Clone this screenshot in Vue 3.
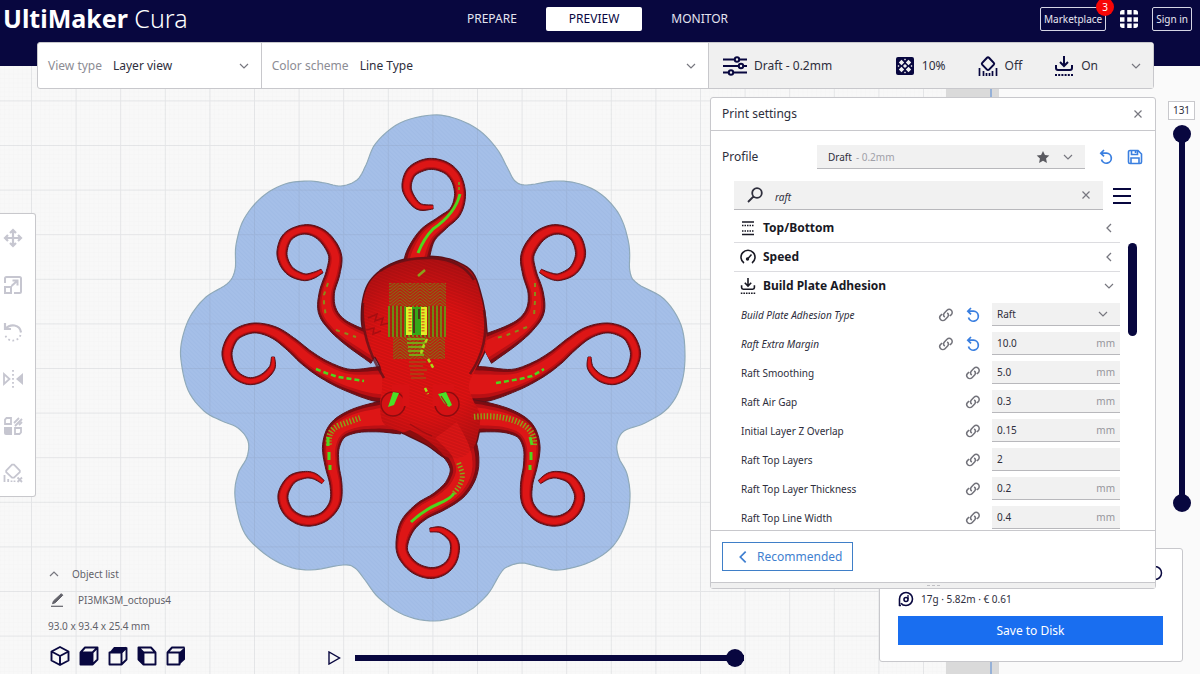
<template>
  <div class="app">
    <!-- Icon sprite -->
    <svg class="sprite" aria-hidden="true">
      <symbol id="down" viewBox="0 0 12 12"><path d="M2 4l4 4 4-4" fill="none" stroke="currentColor" stroke-width="1.2" /></symbol>
      <symbol id="up" viewBox="0 0 12 12"><path d="M2 8l4-4 4 4" fill="none" stroke="currentColor" stroke-width="1.2" /></symbol>
      <symbol id="left" viewBox="0 0 12 12"><path d="M8 2L4 6l4 4" fill="none" stroke="currentColor" stroke-width="1.3" /></symbol>
      <symbol id="close" viewBox="0 0 12 12"><path d="M2.5 2.5l7 7M9.5 2.5l-7 7" fill="none" stroke="currentColor" stroke-width="1.2" /></symbol>
      <symbol id="apps" viewBox="0 0 20 20">
        <path d="M3 0h2v5H0V3a3 3 0 0 1 3-3zM8 0h5v5H8zM15 0h2a3 3 0 0 1 3 3v2h-5zM0 8h5v5H0zM8 8h5v5H8zM15 8h5v5h-5zM0 15h5v5H3a3 3 0 0 1-3-3zM8 15h5v5H8zM15 15h5v2a3 3 0 0 1-3 3h-2z" fill="currentColor" />
      </symbol>
      <symbol id="sliders" viewBox="0 0 24 20">
        <g fill="none" stroke="currentColor" stroke-width="2">
          <path d="M0 3.5h11M17 3.5h7M0 10h15M21 10h3M0 16.5h5M11 16.5h13" />
          <circle cx="14" cy="3.5" r="2.2" /><circle cx="18" cy="10" r="2.2" /><circle cx="8" cy="16.5" r="2.2" />
        </g>
      </symbol>
      <symbol id="infill" viewBox="0 0 20 20">
        <rect x="1" y="1" width="18" height="18" rx="2" fill="currentColor" />
        <g fill="#f0f0f0">
          <path d="M6.5 3.8l2.7 2.7-2.7 2.7-2.7-2.7zM13.5 3.8l2.7 2.7-2.7 2.7-2.7-2.7zM6.5 10.8l2.7 2.7-2.7 2.7-2.7-2.7zM13.5 10.8l2.7 2.7-2.7 2.7-2.7-2.7z" />
          <path d="M10 7.9l2.1 2.1-2.1 2.1L7.9 10zM10 2.5l1 1-1 1-1-1zM10 15.5l1 1-1 1-1-1zM3.5 9l1 1-1 1-1-1zM16.5 9l1 1-1 1-1-1z" />
        </g>
      </symbol>
      <symbol id="support" viewBox="0 0 20 20">
        <g fill="none" stroke="currentColor" stroke-width="2">
          <path d="M9 1.7a1.4 1.4 0 0 1 2 0l4.8 5.2a1.4 1.4 0 0 1 0 1.8L11 13.6a1.4 1.4 0 0 1-2 0L4.2 8.7a1.4 1.4 0 0 1 0-1.8z" />
          <path d="M1.5 12v8M5.5 15v5M8.5 17v3M11.5 17v3M14.5 15v5M18.5 12v8" stroke-width="1.7" />
        </g>
      </symbol>
      <symbol id="adhesion" viewBox="0 0 20 20">
        <g fill="none" stroke="currentColor" stroke-width="2">
          <path d="M10 0v9M6 6l4 4 4-4M2 9v3a2 2 0 0 0 2 2h12a2 2 0 0 0 2-2V9" />
          <path d="M1 19h18" stroke-dasharray="2 1.2" />
        </g>
      </symbol>
      <symbol id="move" viewBox="0 0 20 20">
        <path d="M10 2v16M2 10h16M7 5l3-3 3 3M7 15l3 3 3-3M5 7l-3 3 3 3M15 7l3 3-3 3" fill="none" stroke="currentColor" stroke-width="2.2" />
      </symbol>
      <symbol id="scale" viewBox="0 0 20 20">
        <path d="M2 8V3.5A1.5 1.5 0 0 1 3.5 2h13A1.5 1.5 0 0 1 18 3.5v13a1.5 1.5 0 0 1-1.5 1.5H11M2 12h6v6H2zM8.5 11L14 6M9.5 5.5h5v5" fill="none" stroke="currentColor" stroke-width="2" />
      </symbol>
      <symbol id="rotate" viewBox="0 0 20 20">
        <path d="M2 1v6h6M2.5 7C7 1.5 17 2 18 10.5" fill="none" stroke="currentColor" stroke-width="2.2" />
        <path d="M17.5 13A8 8 0 0 1 2 12" fill="none" stroke="currentColor" stroke-width="1.8" stroke-dasharray="1.8 2.5" />
      </symbol>
      <symbol id="mirror" viewBox="0 0 20 20">
        <path d="M1 5v10l5.5-5z" fill="none" stroke="currentColor" stroke-width="1.8" />
        <path d="M20 4v12l-7-6z" fill="currentColor" />
        <path d="M10 1v18" stroke="currentColor" stroke-width="1.8" stroke-dasharray="1.8 2.2" />
      </symbol>
      <symbol id="mesh" viewBox="0 0 20 20">
        <path d="M2 8V3.5L3.5 2H8v6zM12 12h6v4.5L16.5 18H12zM11 7l5-5M12 10l7-7M16 9l3-3" fill="none" stroke="currentColor" stroke-width="1.8" />
        <path d="M1 11h8v8H3a2 2 0 0 1-2-2z" fill="currentColor" />
      </symbol>
      <symbol id="blocker" viewBox="0 0 20 20">
        <g fill="none" stroke="currentColor" stroke-width="1.8">
          <path d="M9 1.6h2l5.8 6v1.6L11 14.7H9L3.2 9.2V7.6z" />
          <path d="M1.5 12v7M5.2 16v3M8.5 17.5V19M11.5 17.5V19M14.5 14.5L19 19M19 14.5L14.5 19" />
        </g>
      </symbol>
      <symbol id="reset" viewBox="0 0 16 16">
        <path d="M6 1L2.8 4.2 6 7.4M3 4.2h5.5a5 5 0 1 1-5 6.3" fill="none" stroke="currentColor" stroke-width="1.7" />
      </symbol>
      <symbol id="save" viewBox="0 0 16 16">
        <path d="M3 1.5h8L14.5 5v8a1.5 1.5 0 0 1-1.5 1.5H3A1.5 1.5 0 0 1 1.5 13V3A1.5 1.5 0 0 1 3 1.5zM4.5 1.5v4h6v-4M4 14.5V9h8v5.5M8.5 2v2" fill="none" stroke="currentColor" stroke-width="1.6" />
      </symbol>
      <symbol id="star" viewBox="0 0 16 16"><path d="M8 1l2.2 4.7 5 .6-3.7 3.5 1 5.1L8 12.4l-4.5 2.5 1-5.1L.8 6.3l5-.6z" fill="currentColor" /></symbol>
      <symbol id="search" viewBox="0 0 16 16"><path d="M1 15l5.5-5.5M10 1.2a4.8 4.8 0 1 1 0 9.6 4.8 4.8 0 0 1 0-9.6z" fill="none" stroke="currentColor" stroke-width="1.8" /></symbol>
      <symbol id="menu" viewBox="0 0 18 18"><path d="M0 2h18M0 9h18M0 16h18" stroke="currentColor" stroke-width="2" /></symbol>
      <symbol id="layers" viewBox="0 0 16 16">
        <path d="M2 2h12M2 14.5h12" stroke="currentColor" stroke-width="1.6" />
        <path d="M2 5.5h12M2 11h12" stroke="currentColor" stroke-width="1.3" stroke-dasharray="1.5 1" />
      </symbol>
      <symbol id="speed" viewBox="0 0 16 16">
        <path d="M4 14a7 7 0 1 1 8 0" fill="none" stroke="currentColor" stroke-width="1.6" />
        <path d="M8 9.5l3.5-4" stroke="currentColor" stroke-width="1.5" /><circle cx="7.5" cy="10" r="1.7" fill="currentColor" />
      </symbol>
      <symbol id="link" viewBox="0 0 16 16">
        <path d="M6.8 10.2a3 3 0 0 1-.4-4.2L9 3.3a3 3 0 0 1 4.3 4.3L11.8 9M9.2 5.8a3 3 0 0 1 .4 4.2L7 12.7a3 3 0 0 1-4.3-4.3L4.2 7" fill="none" stroke="currentColor" stroke-width="1.5" />
      </symbol>
      <symbol id="pencil" viewBox="0 0 14 14"><path d="M1 13.3h12" stroke="currentColor" stroke-width="1.2" /><path d="M11.3.7l1.5 1.5-7.5 7.5-2.8 1 1-2.8z" fill="currentColor" stroke="currentColor" /></symbol>
      <symbol id="spool" viewBox="0 0 16 16">
        <g fill="none" stroke="currentColor" stroke-width="1.6">
          <path d="M1.5 15V8A6.5 6.5 0 1 1 8 14.5c-2 0-4-.9-5-2.3M1 14.5h2" />
          <circle cx="8" cy="8.5" r="2" /><path d="M10 8V4" stroke-width="1.3" />
        </g>
      </symbol>
      <symbol id="info" viewBox="0 0 16 16"><circle cx="8" cy="8" r="6.5" fill="none" stroke="currentColor" stroke-width="1.5" /><path d="M8 7v5M8 4v1.5" stroke="currentColor" stroke-width="1.5" /></symbol>
      <symbol id="play" viewBox="0 0 14 14"><path d="M2 1v12l10.5-6z" fill="none" stroke="currentColor" stroke-width="1.4" /></symbol>
      <symbol id="cube-3d" viewBox="0 0 20 20"><path d="M10 1l8.5 4.5v9L10 19l-8.5-4.5v-9zM1.5 5.5L10 10l8.5-4.5M10 10v9" fill="none" stroke="currentColor" stroke-width="1.9" stroke-linejoin="round" /></symbol>
      <symbol id="cube-front" viewBox="0 0 20 20"><path d="M1.5 6.5h12v12h-12zM1.5 6.5l4.5-5h12.500v12l-5 5M13.5 6.5l5-5" fill="none" stroke="currentColor" stroke-width="1.9" stroke-linejoin="round" /><path d="M1.5 6.5h12v12h-12z" fill="currentColor" /></symbol>
      <symbol id="cube-top" viewBox="0 0 20 20"><path d="M1.5 6.5h12v12h-12zM18.5 1.5v12l-5 5M13.5 6.5l5-5" fill="none" stroke="currentColor" stroke-width="1.9" stroke-linejoin="round" /><path d="M1 7l5-6h13l-5 6z" fill="currentColor" /></symbol>
      <symbol id="cube-left" viewBox="0 0 20 20"><path d="M6.5 6.5h12v12h-12zM6.5 6.5l-5-5H14l4.5 5M1.5 1.5v12l5 5" fill="none" stroke="currentColor" stroke-width="1.9" stroke-linejoin="round" /><path d="M1 1l6 5.5V19l-6-5.5z" fill="currentColor" /></symbol>
      <symbol id="cube-right" viewBox="0 0 20 20"><path d="M1.5 6.5h12v12h-12zM1.5 6.5l4.5-5h12.500" fill="none" stroke="currentColor" stroke-width="1.9" stroke-linejoin="round" /><path d="M13 6.5L19 1v12.500L13 19z" fill="currentColor" /></symbol>
    </svg>

    <!-- Build plate with the sliced model -->
    <svg class="scene" viewBox="0 0 1200 674" preserveAspectRatio="xMidYMid slice" role="img" aria-label="Layer preview of PI3MK3M_octopus4">
      <defs>
        <pattern id="minor" x="31" y="100.4" width="4.46" height="4.46" patternUnits="userSpaceOnUse">
          <path d="M0 0H4.46M0 0V4.46" fill="none" stroke="#eeeeee" stroke-width="0.5" />
        </pattern>
        <pattern id="major" x="31" y="100.4" width="44.6" height="44.6" patternUnits="userSpaceOnUse">
          <path d="M0 .5H44.6M.5 0V44.6" fill="none" stroke="#6a7480" stroke-opacity="0.13" />
        </pattern>
        <pattern id="hatch" width="3" height="3" patternUnits="userSpaceOnUse" patternTransform="rotate(-45)">
          <path d="M.5 0v3" stroke="#96b3df" stroke-width="0.7" />
        </pattern>
        <pattern id="ridges" width="3" height="3" patternUnits="userSpaceOnUse" patternTransform="rotate(20)">
          <path d="M0 1h3" stroke="#6e0a0c" stroke-width="0.8" />
        </pattern>
        <pattern id="skin" width="20" height="3" patternUnits="userSpaceOnUse">
          <rect width="20" height="3" fill="#b02a10" />
          <path d="M0 0l10 8L20 0M0-3l10 8 10-8M0-6l10 8 10-8" fill="none" stroke="#6f8a16" />
        </pattern>
        <pattern id="bars" x="388" width="4" height="4" patternUnits="userSpaceOnUse">
          <path d="M1 0v4" stroke="#56a812" stroke-width="1.6" /><path d="M3 0v4" stroke="#8c2a0c" stroke-width="1.2" />
        </pattern>
        <radialGradient id="head" gradientUnits="userSpaceOnUse" cx="425" cy="360" r="110">
          <stop offset="0.5" stop-color="#e01212" />
          <stop offset="1" stop-color="#a80f12" />
        </radialGradient>
      </defs>
      <rect width="1200" height="674" fill="#fafafa" />
      <rect width="946" height="674" fill="#f8f8f8" />
      <rect width="946" height="674" fill="url(#minor)" />
      <rect x="946" width="53" height="674" fill="#dadada" />
      <path d="M991 0v674" stroke="#7fa3d6" stroke-width="1.5" />
      <path :d="raft" fill="#a5bfe8" stroke="#8fa9b8" stroke-width="1.2" />
      <path :d="raft" fill="url(#hatch)" opacity="0.45" />
      <rect width="946" height="674" fill="url(#major)" />

      <path :d="body" fill="#7c0c12" stroke="#5b1118" stroke-width="3" />
      <g v-for="layer in shades" :key="layer.scale" :fill="layer.fill" :stroke="layer.stroke" stroke-linejoin="round">
        <path v-for="(arm, i) in arms" :key="i" :d="armPath(arm, layer.scale)" />
      </g>
      <path :d="body" fill="url(#head)" />
      <path :d="armPath(frontArm, 0.56)" fill="#dd1616" />
      <path :d="body" fill="url(#ridges)" opacity="0.35" />
      <path d="M363 303Q360 340 384 378M484 310Q490 345 470 374M380 271Q400 257 432 258Q462 260 474 280" fill="none" stroke="#5b1118" stroke-width="2.5" opacity="0.75" />
      <g fill="#d41214" stroke="#8c0c10" stroke-width="1.5">
        <circle cx="393" cy="404" r="12" /><circle cx="447" cy="404" r="12" />
      </g>
      <path d="M392 388h14v18M436 406v-18h18" fill="none" stroke="#d81214" stroke-width="7" />
      <path d="M368 318l9-4-2 7 8-3-2 7 8-2M366 330l8-2-1 6 8-3M410 424q12 8 22 12" fill="none" stroke="#8c0c10" stroke-width="1.5" opacity="0.6" />
      <path d="M402 433l28 13 15 12 3 4Q438 444 410 430z" fill="#650b0e" opacity="0.6" />

      <rect x="389" y="283" width="57" height="23" fill="url(#skin)" opacity="0.8" />
      <rect x="388" y="306" width="58" height="31" fill="url(#bars)" />
      <rect x="393" y="337" width="52" height="22" fill="url(#skin)" opacity="0.8" />
      <path d="M405 307h22v28h-22z" fill="#35a818" />
      <path d="M409 307v28M424 307v28" stroke="#e2ee28" stroke-width="6" />
      <path d="M410 309v24M423 309v24" stroke="#d8761c" stroke-width="3" stroke-dasharray="1.5 1.5" />
      <path d="M414 309v24M419 309v10" stroke="#5b1118" stroke-width="1.5" />
      <path d="M407 339h18M407 343h18M408 347h17M408 351h16M409 355h15" stroke="#6fc416" stroke-width="1.5" />
      <path d="M409 362h17M409 366h14M410 370h17M410 374h14M411 378h15" stroke="#8a6a14" />
      <path d="M427 339l-5 10-1 6M428 359l6 10M425 388l3 6" fill="none" stroke="#a8dc18" stroke-width="2.5" stroke-dasharray="4 2" />
      <path d="M418 276l7-6" stroke="#8aa21a" stroke-width="2.5" />
      <path d="M388 407l5-15 6 1-5 12zM438 394l8-2 6 13-3 2-5-4z" fill="#4be026" />
      <path d="M441 396l6 9" stroke="#b01214" stroke-width="1.2" />
      <g fill="none" stroke="#4fd61c">
        <path d="M418 253Q424 238 433 229Q455 214 460 194" stroke-width="3" />
        <path d="M459 190v-8" stroke="#8a8a18" stroke-width="2" stroke-dasharray="3 2" />
        <path d="M411 522Q424 510 438 504T454 493" stroke-width="3" />
        <path d="M454 493Q464 482 462 472L458 461" stroke="#8aa21a" stroke-width="5" stroke-dasharray="1.5 2" />
        <path d="M329 445Q327 430 340 425L360 418M534 445Q535 431 522 424Q504 414 472 417" stroke="#8aa21a" stroke-width="6" stroke-dasharray="1.4 1.8" />
        <path d="M328 437v9M329 452v8M330 465v5M530 437l2 8M531 452v8M530 465v5" stroke-width="3" />
        <path d="M316 369l10 4 12 4 26 4M496 383l24-4 12-3 12-7" stroke-width="2.5" stroke-dasharray="5 3" />
        <path d="M328 283l-4 12v8l2 14M535 283v18l-1 15M336 330l20 7M527 327l-20 8-14 4" stroke="#8a8a18" stroke-width="2" stroke-dasharray="4 5" />
      </g>
    </svg>

    <header class="topbar">
      <h1 class="brand"><b>UltiMaker</b> <span>Cura</span></h1>
      <nav class="stages">
        <button v-for="name in stages" :key="name" type="button" :class="{ active: name === stage }" @click="stage = name">{{ name }}</button>
      </nav>
      <div class="account">
        <button type="button" class="outlined">Marketplace<span class="badge">3</span></button>
        <button type="button" class="plain" aria-label="Applications"><svg class="i18"><use href="#apps" /></svg></button>
        <button type="button" class="outlined">Sign in</button>
      </div>
    </header>

    <section class="stage-menu">
      <div class="menu-cell">
        <label for="view-type">View type</label>
        <div class="pick">
          <select id="view-type"><option>Layer view</option><option>Solid view</option></select>
          <svg class="i12"><use href="#down" /></svg>
        </div>
      </div>
      <div class="menu-cell">
        <label for="color-scheme">Color scheme</label>
        <div class="pick">
          <select id="color-scheme"><option>Line Type</option><option>Material Color</option></select>
          <svg class="i12"><use href="#down" /></svg>
        </div>
      </div>
      <button type="button" class="summary" @click="panelOpen = !panelOpen">
        <span class="profile-name"><svg class="i24"><use href="#sliders" /></svg>Draft - 0.2mm</span>
        <span><svg class="i20"><use href="#infill" /></svg>10%</span>
        <span><svg class="i20"><use href="#support" /></svg>Off</span>
        <span><svg class="i20"><use href="#adhesion" /></svg>On</span>
        <svg class="i12"><use href="#down" /></svg>
      </button>
    </section>

    <main class="workspace">
      <div class="left-side">
        <div class="toolbar">
          <button v-for="tool in tools" :key="tool" type="button" :aria-label="tool" disabled>
            <svg class="i20"><use :href="'#' + tool" /></svg>
          </button>
        </div>
        <div class="objects">
          <button type="button" class="plain object-toggle"><svg class="i12"><use href="#up" /></svg>Object list</button>
          <button type="button" class="plain object-name"><svg class="i14"><use href="#pencil" /></svg>PI3MK3M_octopus4</button>
          <p>93.0 x 93.4 x 25.4 mm</p>
        </div>
      </div>

      <section v-if="panelOpen" class="panel">
        <div class="panel-title">
          <h2>Print settings</h2>
          <button type="button" class="plain" aria-label="Close" @click="panelOpen = false"><svg class="i12"><use href="#close" /></svg></button>
        </div>

        <div class="profile-row">
          <label for="profile">Profile</label>
          <div class="profile-box">
            <select id="profile"><option>Draft</option><option>Fine</option></select>
            <span class="muted">- 0.2mm</span>
            <svg class="i14 star"><use href="#star" /></svg>
            <svg class="i12"><use href="#down" /></svg>
          </div>
          <button type="button" class="plain blue" aria-label="Discard changes"><svg class="i16"><use href="#reset" /></svg></button>
          <button type="button" class="plain blue" aria-label="Save profile"><svg class="i16"><use href="#save" /></svg></button>
        </div>

        <div class="search-row">
          <div class="search-box">
            <svg class="i16"><use href="#search" /></svg>
            <input v-model="query" type="text" aria-label="Search settings" />
            <button type="button" class="plain" aria-label="Clear" @click="query = ''"><svg class="i12"><use href="#close" /></svg></button>
          </div>
          <button type="button" class="plain navy" aria-label="Setting visibility"><svg class="i18"><use href="#menu" /></svg></button>
        </div>

        <div class="settings">
          <div class="list">
            <button v-for="cat in categories" :key="cat.name" type="button" class="category" :class="{ open: cat.open }">
              <svg class="i16"><use :href="'#' + cat.icon" /></svg>
              <span>{{ cat.name }}</span>
              <svg class="i12 arrow"><use :href="cat.open ? '#down' : '#left'" /></svg>
            </button>
            <div v-for="(item, i) in settings" :key="item.name" class="setting">
              <label :for="'setting-' + i" :class="{ changed: item.changed }">{{ item.name }}</label>
              <svg class="i16 link"><use href="#link" /></svg>
              <button v-if="item.changed" type="button" class="plain blue" aria-label="Restore value"><svg class="i16"><use href="#reset" /></svg></button>
              <div class="field">
                <template v-if="item.options">
                  <select :id="'setting-' + i" v-model="item.value">
                    <option v-for="option in item.options" :key="option">{{ option }}</option>
                  </select>
                  <svg class="i12"><use href="#down" /></svg>
                </template>
                <template v-else>
                  <input :id="'setting-' + i" v-model="item.value" type="text" />
                  <span v-if="item.unit">{{ item.unit }}</span>
                </template>
              </div>
            </div>
          </div>
          <div class="scroll"></div>
        </div>

        <div class="panel-foot">
          <button type="button" class="recommended"><svg class="i16"><use href="#left" /></svg>Recommended</button>
        </div>
        <div class="grip"><i></i><i></i><i></i></div>
      </section>

      <div class="layer-slider">
        <output>{{ topLayer }}</output>
        <div class="tracks">
          <input v-model="topLayer" type="range" min="1" max="131" aria-label="Top layer" />
          <input v-model="bottomLayer" type="range" min="1" max="131" aria-label="Bottom layer" />
        </div>
      </div>
    </main>

    <footer class="dock">
      <div class="views">
        <button v-for="view in views" :key="view" type="button" class="plain navy" :aria-label="view"><svg class="i20"><use :href="'#' + view" /></svg></button>
      </div>
      <div class="playback">
        <button type="button" class="plain navy" aria-label="Play"><svg class="i14"><use href="#play" /></svg></button>
        <input v-model="progress" type="range" min="0" max="100" aria-label="Layer progress" />
      </div>
    </footer>

    <aside class="job">
      <div class="job-time"><svg class="i16"><use href="#info" /></svg></div>
      <div class="job-cost"><svg class="i16"><use href="#spool" /></svg>17g · 5.82m · € 0.61</div>
      <button type="button">Save to Disk</button>
    </aside>
  </div>
</template>

<script setup>
import { ref } from 'vue'

const stages = ['PREPARE', 'PREVIEW', 'MONITOR']
const stage = ref('PREVIEW')
const panelOpen = ref(true)
const query = ref('raft')
const topLayer = ref(131)
const bottomLayer = ref(1)
const progress = ref(100)

const tools = ['move', 'scale', 'rotate', 'mirror', 'mesh', 'blocker']
const views = ['cube-3d', 'cube-front', 'cube-top', 'cube-left', 'cube-right']

const categories = [
  { name: 'Top/Bottom', icon: 'layers' },
  { name: 'Speed', icon: 'speed' },
  { name: 'Build Plate Adhesion', icon: 'adhesion', open: true }
]

const settings = ref([
  { name: 'Build Plate Adhesion Type', value: 'Raft', options: ['Skirt', 'Brim', 'Raft', 'None'], changed: true },
  { name: 'Raft Extra Margin', value: '10.0', unit: 'mm', changed: true },
  { name: 'Raft Smoothing', value: '5.0', unit: 'mm' },
  { name: 'Raft Air Gap', value: '0.3', unit: 'mm' },
  { name: 'Initial Layer Z Overlap', value: '0.15', unit: 'mm' },
  { name: 'Raft Top Layers', value: '2' },
  { name: 'Raft Top Layer Thickness', value: '0.2', unit: 'mm' },
  { name: 'Raft Top Line Width', value: '0.4', unit: 'mm' }
])

// Catmull-Rom through the points, works for any number of components
function smooth(points, closed = false) {
  const n = points.length
  const at = (i) => (closed ? points[(i + n) % n] : points[Math.max(0, Math.min(n - 1, i))])
  const out = []
  for (let i = 0; i < (closed ? n : n - 1); i++) {
    const [a, b, c, d] = [at(i - 1), at(i), at(i + 1), at(i + 2)]
    for (let s = 0; s < 6; s++) {
      const t = s / 6
      out.push(b.map((v, k) => {
        const t1 = (c[k] - a[k]) * t
        const t2 = (2 * a[k] - 5 * v + 4 * c[k] - d[k]) * t * t
        const t3 = (3 * v - a[k] - 3 * c[k] + d[k]) * t * t * t
        return v + (t1 + t2 + t3) / 2
      }))
    }
  }
  if (!closed) out.push(points[n - 1])
  return out
}

const toPath = (points) => 'M' + points.map((p) => p[0].toFixed(1) + ' ' + p[1].toFixed(1)).join('L') + 'Z'

// Arms are centre lines from tip to base: x, y, half width
const sideArms = [
  [[322, 271, 2], [313, 275.5, 3], [303, 277, 3.5], [289, 270, 4.5], [282, 255, 5], [286, 239, 5], [297, 231, 4.5], [311, 230, 5], [325, 238, 6], [335, 255, 6.5], [333, 273, 7], [327, 292, 7.5], [327, 310, 9], [336, 324, 9], [352, 336, 11], [378, 350, 15]],
  [[273, 357, 1.5], [272, 368, 3], [262, 378, 3.5], [248, 381, 3.5], [234, 373, 4], [227, 355, 5], [232, 339, 5], [242, 331, 5], [257, 328, 5], [275, 333, 6], [292, 345, 7], [307, 358, 8], [325, 370, 9], [348, 380, 11], [375, 384, 17], [395, 384, 18]],
  [[323, 482, 2], [314, 476, 3], [304, 475, 3.5], [291, 480, 4.5], [283, 495, 5], [287, 510, 5], [298, 519, 5], [311, 521, 5], [325, 516, 5], [335, 503, 5.5], [336, 485, 6], [332, 465, 7], [331, 446, 8.5], [338, 430, 10], [355, 421, 12], [378, 417, 15], [400, 416, 18]]
]
const mirrored = sideArms.map((arm) => arm.map(([x, y, w]) => [862.5 - x, y, w]))
const backArm = [[433, 207, 2], [418, 206, 3.5], [407, 190, 4.5], [410, 174, 5], [421, 166, 5.5], [434, 164, 5.5], [448, 169, 5.5], [457, 180, 5.5], [460, 196, 5.5], [455, 212, 6], [442, 223, 7], [427, 236, 9], [418, 255, 12], [416, 270, 13]]
const frontArm = [[430, 530, 2], [441, 530, 3], [452, 538, 4], [455, 548, 4.5], [452, 561, 4.5], [443, 570, 5], [430, 573, 5.5], [415, 568, 5.5], [404, 556, 5.5], [402, 543, 6], [408, 525, 8], [422, 511, 9], [440, 501, 10], [456, 488, 12], [464, 470, 14], [460, 450, 18], [446, 430, 24]]
const arms = [...sideArms, ...mirrored, backArm, frontArm]

const shades = [
  { scale: 1, fill: '#7c0c12', stroke: '#5b1118' },
  { scale: 0.78, fill: '#b91014', stroke: 'none' },
  { scale: 0.56, fill: '#dd1616', stroke: 'none' }
]

function armPath(arm, scale) {
  const line = smooth(arm)
  const a = []
  const b = []
  line.forEach(([x, y, w], i) => {
    const p = line[Math.max(0, i - 1)]
    const q = line[Math.min(line.length - 1, i + 1)]
    const len = Math.hypot(q[0] - p[0], q[1] - p[1]) || 1
    const nx = ((p[1] - q[1]) / len) * w * scale
    const ny = ((q[0] - p[0]) / len) * w * scale
    a.push([x + nx, y + ny])
    b.unshift([x - nx, y - ny])
  })
  return toPath([...a, ...b])
}

const body = toPath(smooth([
  [430, 257], [408, 259], [387, 267], [370, 282], [363, 303], [363, 328], [371, 349], [381, 368], [382, 388],
  [380, 405], [384, 424], [404, 433], [428, 445], [444, 456], [460, 458], [473, 448], [478, 434],
  [480, 415], [473, 400], [469, 385], [477, 366], [486, 345], [485, 320], [481, 297], [472, 273], [453, 261]
], true))

const raft = toPath(smooth([
  [432, 115], [400, 123], [376, 143], [366, 165], [357, 180], [341, 186], [325, 183], [308, 181], [285, 184], [262, 197],
  [244, 219], [236, 245], [235, 270], [227, 284], [206, 297], [190, 317], [182, 340], [181, 360], [188, 390], [204, 411],
  [222, 421], [238, 428], [248, 441], [247, 457], [238, 474], [235, 497], [243, 530], [260, 550], [284, 565], [310, 570],
  [343, 565], [355, 568], [365, 580], [379, 598], [404, 615], [435, 621], [465, 613], [487, 595], [500, 574], [507, 567],
  [522, 563], [540, 567], [560, 570], [590, 562], [613, 546], [626, 522], [630, 497], [627, 474], [619, 458], [617, 444],
  [624, 431], [645, 423], [668, 408], [681, 385], [685, 356], [681, 325], [664, 299], [638, 284], [630, 272], [629, 245],
  [620, 216], [602, 195], [580, 184], [555, 181], [527, 185], [515, 181], [507, 167], [497, 149], [480, 131], [457, 119]
], true))
</script>

<style>
body {
  margin: 0;
}
</style>

<style scoped>
.app {
  --navy: #08073f;
  --blue: #196ef0;
  --line: #c8c8cc;
  --field: #f1f1f1;
  position: relative;
  isolation: isolate;
  display: flex;
  flex-direction: column;
  min-height: 100vh;
  overflow: hidden;
  font-family: 'Noto Sans', sans-serif;
  font-size: 12px;
  line-height: 16px;
  color: #2e2e3c;
}

.sprite {
  position: absolute;
  width: 0;
  height: 0;
}
.scene {
  position: absolute;
  inset: 0;
  z-index: -1;
  width: 100%;
  height: 100%;
}

svg { flex: none; }
.i12 { width: 12px; height: 12px; color: #77777f; }
.i14 { width: 14px; height: 14px; }
.i16 { width: 16px; height: 16px; }
.i18 { width: 18px; height: 18px; }
.i20 { width: 20px; height: 20px; }
.i24 { width: 24px; height: 20px; }

button, select, input {
  margin: 0;
  font: inherit;
  color: inherit;
}
button { cursor: pointer; }
select {
  appearance: none;
  border: 0;
  padding: 0;
  background: none;
}
h1, h2, p { margin: 0; }

.plain {
  display: flex;
  align-items: center;
  border: 0;
  padding: 0;
  background: none;
}
.blue { color: #3a7fe0; }
.navy { color: var(--navy); }

/* Header */
.topbar {
  display: grid;
  grid-template-columns: 1fr auto 1fr;
  align-items: start;
  padding: 7px 8px 35px 3px;
  background: var(--navy);
  color: #fff;
}
.brand {
  font-size: 25px;
  line-height: 22px;
  font-weight: 300;
  white-space: nowrap;
}
.brand b { font-weight: 700; }
.stages {
  display: flex;
  gap: 6px;
}
.stages button {
  height: 24px;
  border: 0;
  border-radius: 2px;
  padding: 0 23px;
  background: none;
  color: #e4e4f0;
}
.stages .active {
  background: #fff;
  color: var(--navy);
}
.account {
  display: flex;
  justify-content: flex-end;
  align-items: center;
  gap: 14px;
}
.outlined {
  position: relative;
  height: 24px;
  border: 1px solid #d5d5e4;
  border-radius: 2px;
  padding: 0 3px;
  background: none;
  font-size: 10px;
  color: #e8e8f2;
}
.badge {
  position: absolute;
  top: -10px;
  right: -9px;
  width: 18px;
  border-radius: 9px;
  background: #f80606;
  line-height: 18px;
  color: #fff;
}

/* Stage menu */
.stage-menu {
  display: grid;
  grid-template-columns: 1fr 2fr 444px;
  height: 45px;
  margin: -24px 46px 0 37px;
  border: 1px solid var(--line);
  border-radius: 3px;
  background: #fff;
}
.menu-cell {
  display: flex;
  align-items: center;
  gap: 11px;
  padding: 0 11px 0 10px;
  border-right: 1px solid var(--line);
}
.menu-cell label { color: #8c8c94; }
.pick {
  display: grid;
  flex: 1;
  align-items: center;
}
.pick select, .pick svg { grid-area: 1 / 1; }
.pick svg {
  justify-self: end;
  pointer-events: none;
}
.summary {
  display: flex;
  align-items: center;
  gap: 32px;
  border: 0;
  padding: 0 11px 0 14px;
  background: #f0f0f0;
}
.summary span {
  display: flex;
  align-items: center;
  gap: 7px;
}
.summary span svg { color: var(--navy); }
.summary .profile-name { flex: 1; }

/* Workspace */
.workspace {
  display: flex;
  flex: 1;
  align-items: flex-start;
}
.left-side {
  display: flex;
  flex: 1;
  flex-direction: column;
  align-self: stretch;
}
.toolbar {
  display: flex;
  flex-direction: column;
  width: 35px;
  margin-top: 124px;
  border: 1px solid var(--line);
  border-left: 0;
  border-radius: 0 3px 3px 0;
  background: #fff;
}
.toolbar button {
  display: flex;
  align-items: center;
  height: 47px;
  border: 0;
  padding: 0 3px;
  background: none;
  color: #c6c6d0;
}
.objects {
  display: flex;
  flex-direction: column;
  gap: 10px;
  margin: auto 0 0 48px;
  padding-bottom: 8px;
  font-size: 10px;
  color: #62626a;
}
.object-toggle { gap: 12px; }
.object-name { gap: 14px; padding: 0 2px; }

/* Print settings panel */
.panel {
  z-index: 2;
  box-sizing: border-box;
  width: 446px;
  margin-top: 8px;
  border: 1px solid var(--line);
  border-radius: 3px;
  background: #fff;
}
.panel-title {
  display: flex;
  align-items: center;
  justify-content: space-between;
  height: 32px;
  padding: 0 11px;
  border-bottom: 1px solid var(--line);
}
.panel-title h2 {
  font-size: 12px;
  font-weight: 400;
}
.profile-row {
  display: flex;
  align-items: center;
  gap: 13px;
  padding: 14px 12px 0 11px;
}
.profile-row > label { flex: 1; }
.profile-box {
  display: flex;
  align-items: center;
  gap: 4px;
  box-sizing: border-box;
  width: 268px;
  height: 24px;
  border-bottom: 1px solid #b8b8bc;
  padding: 0 11px;
  background: var(--field);
  font-size: 10px;
}
.profile-box select { field-sizing: content; }
.muted { color: #a0a0a8; }
.star {
  margin: 0 8px 0 auto;
  color: #5a5a60;
}
.search-row {
  display: flex;
  align-items: center;
  gap: 10px;
  padding: 12px 24px 0 23px;
}
.search-box {
  display: flex;
  flex: 1;
  align-items: center;
  gap: 12px;
  box-sizing: border-box;
  height: 29px;
  border-bottom: 1px solid #b8b8bc;
  padding: 0 11px 0 13px;
  background: var(--field);
}
.search-box input {
  flex: 1;
  min-width: 0;
  border: 0;
  padding: 3px 0 0;
  background: none;
  font-size: 10px;
  font-style: italic;
}
.settings {
  display: flex;
  gap: 8px;
  max-height: 316px;
  margin-top: 4px;
  padding: 0 18px 0 23px;
  overflow: hidden;
  font-size: 10px;
}
.list { flex: 1; }
.scroll {
  width: 9px;
  height: 93px;
  margin-top: 29px;
  border-radius: 5px;
  background: var(--navy);
}
.category {
  display: flex;
  align-items: center;
  gap: 7px;
  width: 100%;
  height: 29px;
  border: 0;
  border-bottom: 1px solid #dcdce0;
  padding: 0 5px 0 6px;
  background: none;
  font-size: 12px;
  font-weight: 700;
  color: #191924;
}
.category.open {
  height: 28px;
  border-bottom: 0;
}
.category .arrow { margin-left: auto; }
.setting {
  display: flex;
  align-items: center;
  gap: 11px;
  height: 29px;
  padding-left: 7px;
}
.setting label { flex: 1; }
.changed { font-style: italic; }
.link { color: #72727a; }
.field {
  display: flex;
  align-items: center;
  box-sizing: border-box;
  width: 128px;
  height: 23px;
  border-bottom: 1px solid #b8b8bc;
  padding: 0 5px;
  background: var(--field);
}
.field input, .field select {
  flex: 1;
  min-width: 0;
  border: 0;
  padding: 0;
  background: none;
}
.field svg { margin-right: 6px; }
.field span { color: #96969c; }
.panel-foot {
  border-top: 1px solid var(--line);
  padding: 11px;
}
.recommended {
  display: flex;
  align-items: center;
  gap: 6px;
  height: 29px;
  border: 1px solid #3f7fc8;
  padding: 0 10px 0 12px;
  background: #fff;
  color: #3f7fd0;
}
.grip {
  display: flex;
  justify-content: center;
  align-items: center;
  gap: 2px;
  height: 5px;
  border-top: 1px solid var(--line);
  background: #f0f0f0;
}
.grip i {
  width: 3px;
  height: 1px;
  background: #c0c0c4;
}

/* Sliders */
.layer-slider {
  display: flex;
  flex-direction: column;
  align-items: center;
  gap: 5px;
  width: 27px;
  margin: 12px 5px 0 12px;
}
output {
  box-sizing: border-box;
  width: 100%;
  border: 1px solid var(--line);
  background: #fff;
  font-size: 10px;
  line-height: 17px;
  text-align: center;
}
.tracks {
  display: grid;
  width: 18px;
  height: 387px;
  background: linear-gradient(var(--navy), var(--navy)) center / 6px 370px no-repeat;
}
.tracks input {
  grid-area: 1 / 1;
  width: 18px;
  height: 100%;
  margin: 0;
  writing-mode: vertical-lr;
  direction: rtl;
  pointer-events: none;
}
input[type='range'] {
  appearance: none;
  background: none;
}
input[type='range']::-webkit-slider-thumb {
  appearance: none;
  width: 18px;
  height: 18px;
  border-radius: 50%;
  background: var(--navy);
  pointer-events: auto;
}

.dock {
  display: flex;
  align-items: center;
  gap: 141px;
  padding: 2px 18px 7px 50px;
}
.views {
  display: flex;
  gap: 9px;
}
.playback {
  display: flex;
  flex: 0 1 417px;
  align-items: center;
  gap: 14px;
  padding-top: 5px;
}
.playback input {
  flex: 1;
  height: 18px;
  background: linear-gradient(var(--navy), var(--navy)) center / 100% 6px no-repeat;
}

/* Job info, partly covered by the settings panel */
.job {
  position: absolute;
  right: 17px;
  bottom: 12px;
  z-index: 1;
  box-sizing: border-box;
  width: 304px;
  border: 1px solid var(--line);
  border-radius: 3px;
  padding: 16px 19px 16px 18px;
  background: #fff;
  font-size: 10px;
}
.job-time {
  display: flex;
  justify-content: flex-end;
  height: 18px;
  color: var(--navy);
}
.job-cost {
  display: flex;
  align-items: center;
  gap: 7px;
  margin: 8px 0 9px;
}
.job-cost svg { color: var(--navy); }
.job button {
  width: 100%;
  height: 29px;
  border: 0;
  background: var(--blue);
  font-size: 12px;
  color: #fff;
}
</style>
